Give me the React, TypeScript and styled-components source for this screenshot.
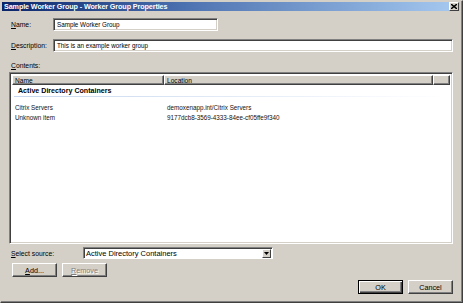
import React from "react";
import styled, { createGlobalStyle } from "styled-components";

const Global = createGlobalStyle`
  html, body { margin: 0; padding: 0; background: #d4d0c8; }
  body { width: 463px; height: 303px; overflow: hidden; }
  * { box-sizing: border-box; }
`;

const Window = styled.div`
  width: 463px;
  height: 303px;
  display: flex;
  flex-direction: column;
  background: #d4d0c8;
  border: 1px solid #d4d0c8;
  border-right-color: #404040;
  border-bottom-color: #404040;
  box-shadow: inset -1px -1px 0 #808080;
  font-family: "Liberation Sans", Arial, sans-serif;
  font-size: 7px;
  color: #000;
`;

const TitleBar = styled.div`
  height: 12px;
  margin: 1px 2px 0 1px;
  display: flex;
  align-items: center;
  justify-content: space-between;
  padding: 0 1px 0 2px;
  background: linear-gradient(to right, #0a246a 0%, #4d72b0 40%, #a6caf0 100%);
`;

const Title = styled.span`
  color: #fff;
  font-weight: bold;
  font-size: 7.2px;
  letter-spacing: -0.1px;
`;

const CloseBtn = styled.div`
  width: 10px;
  height: 9px;
  background: #d4d0c8;
  border: 1px solid;
  border-color: #fff #404040 #404040 #fff;
  display: flex;
  align-items: center;
  justify-content: center;
`;

const Body = styled.div`
  flex: 1;
  display: flex;
  flex-direction: column;
  padding: 7px 9px 8px 8px;
`;

const FieldRow = styled.div<{ $mt?: number }>`
  display: flex;
  align-items: center;
  margin-top: ${(p) => p.$mt ?? 0}px;
`;

const Label = styled.label<{ $w: number }>`
  width: ${(p) => p.$w}px;
  padding-left: 2px;
  font-size: 6.8px;
  flex-shrink: 0;
`;

const U = styled.span`
  text-decoration: underline;
`;

const TextInput = styled.div<{ $w?: number }>`
  height: 13px;
  width: ${(p) => (p.$w ? `${p.$w}px` : "auto")};
  flex: ${(p) => (p.$w ? "none" : "1")};
  background: #fff;
  border: 1px solid;
  border-color: #808080 #fff #fff #808080;
  box-shadow: inset 1px 1px 0 #404040, inset -1px -1px 0 #d4d0c8;
  padding: 0 0 0 3px;
  display: flex;
  align-items: center;
  font-size: 6.3px;
`;

const SectionLabel = styled.div`
  margin-top: 9px;
  padding-left: 2px;
  font-size: 6.8px;
  line-height: 10px;
`;

const ListBox = styled.div`
  margin-top: 1px;
  height: 172px;
  background: #fff;
  border: 1px solid;
  border-color: #808080 #fff #fff #808080;
  box-shadow: inset 1px 1px 0 #404040, inset -1px -1px 0 #d4d0c8;
  padding: 2px;
  display: flex;
  flex-direction: column;
`;

const HeaderRow = styled.div`
  display: flex;
  height: 10px;
`;

const HeaderCell = styled.div<{ $w?: number }>`
  width: ${(p) => (p.$w ? `${p.$w}px` : "auto")};
  flex: ${(p) => (p.$w ? "none" : "1")};
  background: #d4d0c8;
  border: 1px solid;
  border-color: #fff #404040 #404040 #fff;
  box-shadow: inset -1px -1px 0 #808080;
  padding-left: 2px;
  display: flex;
  align-items: center;
  font-size: 6.6px;
`;

const GroupHeader = styled.div`
  margin: 0 2px 0 2px;
  height: 12px;
  padding-left: 4px;
  display: flex;
  align-items: center;
  font-weight: bold;
  font-size: 7.1px;
  border-bottom: 1px solid;
  border-image: linear-gradient(to right, #c5d6ee, #eef3fa 70%, #fff) 1;
`;

const ItemList = styled.div`
  margin-top: 5px;
  display: flex;
  flex-direction: column;
`;

const ItemRow = styled.div`
  display: flex;
  height: 10px;
  align-items: center;
  font-size: 6.3px;
  color: #111;
`;

const Cell = styled.div<{ $w?: number }>`
  width: ${(p) => (p.$w ? `${p.$w}px` : "auto")};
  padding-left: 3px;
  white-space: nowrap;
`;

const SourceRow = styled.div`
  margin-top: 3px;
  display: flex;
  align-items: center;
`;

const Combo = styled.div`
  width: 190px;
  height: 12px;
  background: #fff;
  border: 1px solid;
  border-color: #808080 #fff #fff #808080;
  box-shadow: inset 1px 1px 0 #404040;
  display: flex;
  align-items: center;
  padding-left: 2px;
  font-size: 7.5px;
`;

const ComboText = styled.span`
  flex: 1;
`;

const ComboArrow = styled.div`
  width: 9px;
  height: 9px;
  margin-right: 1px;
  background: #d4d0c8;
  border: 1px solid;
  border-color: #fff #404040 #404040 #fff;
  display: flex;
  align-items: center;
  justify-content: center;
`;

const ButtonRow = styled.div<{ $end?: boolean; $mt: number }>`
  display: flex;
  gap: 5px;
  margin-top: ${(p) => p.$mt}px;
  justify-content: ${(p) => (p.$end ? "flex-end" : "flex-start")};
  padding: ${(p) => (p.$end ? "0 0 0 0" : "0 0 0 3px")};
`;

const Button = styled.div<{ $disabled?: boolean; $default?: boolean }>`
  width: 45px;
  height: 14px;
  background: #d4d0c8;
  border: 1px solid;
  border-color: ${(p) => (p.$default ? "#000" : "#fff #404040 #404040 #fff")};
  box-shadow: ${(p) =>
    p.$default
      ? "inset 1px 1px 0 #fff, inset -1px -1px 0 #404040, inset -2px -2px 0 #808080"
      : "inset -1px -1px 0 #808080"};
  display: flex;
  align-items: center;
  justify-content: center;
  font-size: 7.2px;
  color: ${(p) => (p.$disabled ? "#808080" : "#000")};
  text-shadow: ${(p) => (p.$disabled ? "1px 1px 0 #fff" : "none")};
`;

export default function App() {
  return (
    <>
      <Global />
      <Window>
        <TitleBar>
          <Title>Sample Worker Group - Worker Group Properties</Title>
          <CloseBtn>
            <svg width="6" height="5" viewBox="0 0 6 5">
              <path d="M0 0 L6 5 M6 0 L0 5" stroke="#000" strokeWidth="1.4" />
            </svg>
          </CloseBtn>
        </TitleBar>
        <Body>
          <FieldRow>
            <Label $w={44}>
              <U>N</U>ame:
            </Label>
            <TextInput $w={165}>Sample Worker Group</TextInput>
          </FieldRow>
          <FieldRow $mt={8}>
            <Label $w={44}>
              <U>D</U>escription:
            </Label>
            <TextInput>This is an example worker group</TextInput>
          </FieldRow>
          <SectionLabel>
            <U>C</U>ontents:
          </SectionLabel>
          <ListBox>
            <HeaderRow>
              <HeaderCell $w={152}>Name</HeaderCell>
              <HeaderCell $w={269}>Location</HeaderCell>
              <HeaderCell />
            </HeaderRow>
            <GroupHeader>Active Directory Containers</GroupHeader>
            <ItemList>
              <ItemRow>
                <Cell $w={152}>Citrix Servers</Cell>
                <Cell>demoxenapp.int/Citrix Servers</Cell>
              </ItemRow>
              <ItemRow>
                <Cell $w={152}>Unknown item</Cell>
                <Cell>9177dcb8-3569-4333-84ee-cf05ffe9f340</Cell>
              </ItemRow>
            </ItemList>
          </ListBox>
          <SourceRow>
            <Label $w={74}>
              <U>S</U>elect source:
            </Label>
            <Combo>
              <ComboText>Active Directory Containers</ComboText>
              <ComboArrow>
                <svg width="5" height="3" viewBox="0 0 5 3">
                  <path d="M0 0 H5 L2.5 3 Z" fill="#000" />
                </svg>
              </ComboArrow>
            </Combo>
          </SourceRow>
          <ButtonRow $mt={4}>
            <Button>
              <U>A</U>dd...
            </Button>
            <Button $disabled>
              <U>R</U>emove
            </Button>
          </ButtonRow>
          <ButtonRow $end $mt={3}>
            <Button $default>OK</Button>
            <Button>Cancel</Button>
          </ButtonRow>
        </Body>
      </Window>
    </>
  );
}
